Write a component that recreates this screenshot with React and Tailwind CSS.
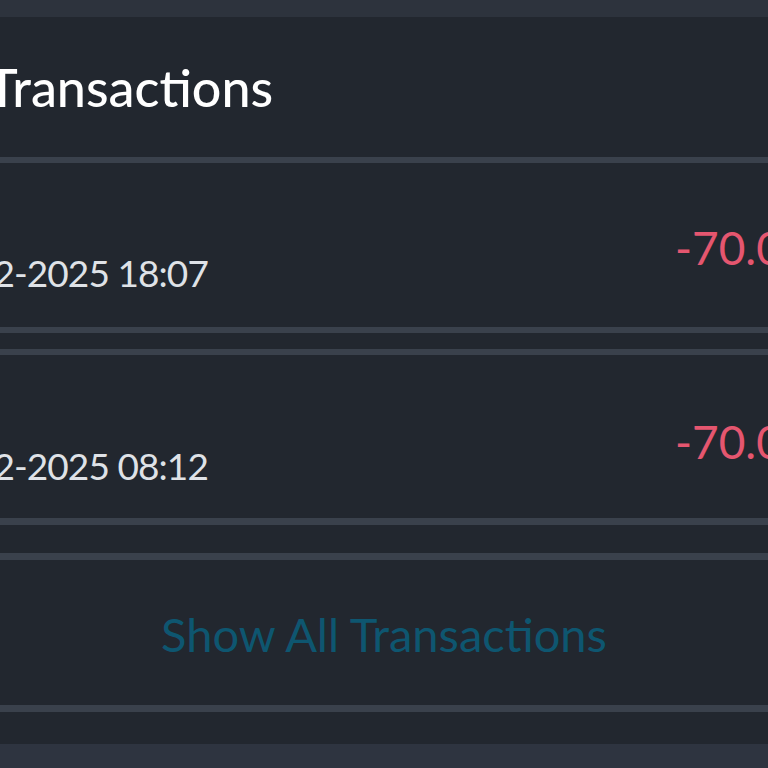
export default function App() {
  const font = { fontFamily: "Lato, 'Open Sans', sans-serif" };
  return (
    <div className="w-[768px] h-[768px] overflow-hidden bg-[#2d333d] flex flex-col" style={font}>
      <div className="h-[17px] shrink-0 bg-[#2d333d]" />
      <div className="h-[146px] shrink-0 bg-[#22272f] border-b-[6px] border-[#3a414c] flex items-start pt-[44px]">
        <h2 className="-ml-[13px] text-[52px] leading-none text-white font-medium whitespace-nowrap">Transactions</h2>
      </div>
      <div className="bg-[#22272f] flex flex-col shrink-0">
        <div className="h-[170px] border-b-[6px] border-[#3a414c] flex justify-between">
          <div className="flex flex-col justify-end pb-[36px]">
            <span className="-ml-[81px] text-[37px] leading-none tracking-tight text-[#dfe2e7] whitespace-nowrap">12-12-2025 18:07</span>
          </div>
          <div className="pt-[62px] -mr-[80px]">
            <span className="text-[46px] leading-none text-[#e5566f] whitespace-nowrap">-70.00 €</span>
          </div>
        </div>
        <div className="h-[16px]" />
        <div className="h-[176px] border-t-[6px] border-b-[7px] border-[#3a414c] flex justify-between">
          <div className="flex flex-col justify-end pb-[34px]">
            <span className="-ml-[81px] text-[37px] leading-none tracking-tight text-[#dfe2e7] whitespace-nowrap">12-12-2025 08:12</span>
          </div>
          <div className="pt-[64px] -mr-[80px]">
            <span className="text-[46px] leading-none text-[#e5566f] whitespace-nowrap">-70.00 €</span>
          </div>
        </div>
        <div className="h-[28px]" />
        <div className="h-[159px] border-y-[7px] border-[#3a414c] flex items-start justify-center pt-[51px]">
          <span className="text-[47px] leading-none text-[#0e5670] whitespace-nowrap">Show All Transactions</span>
        </div>
        <div className="h-[32px]" />
      </div>
      <div className="flex-1 bg-[#2e3440]" />
    </div>
  );
}
